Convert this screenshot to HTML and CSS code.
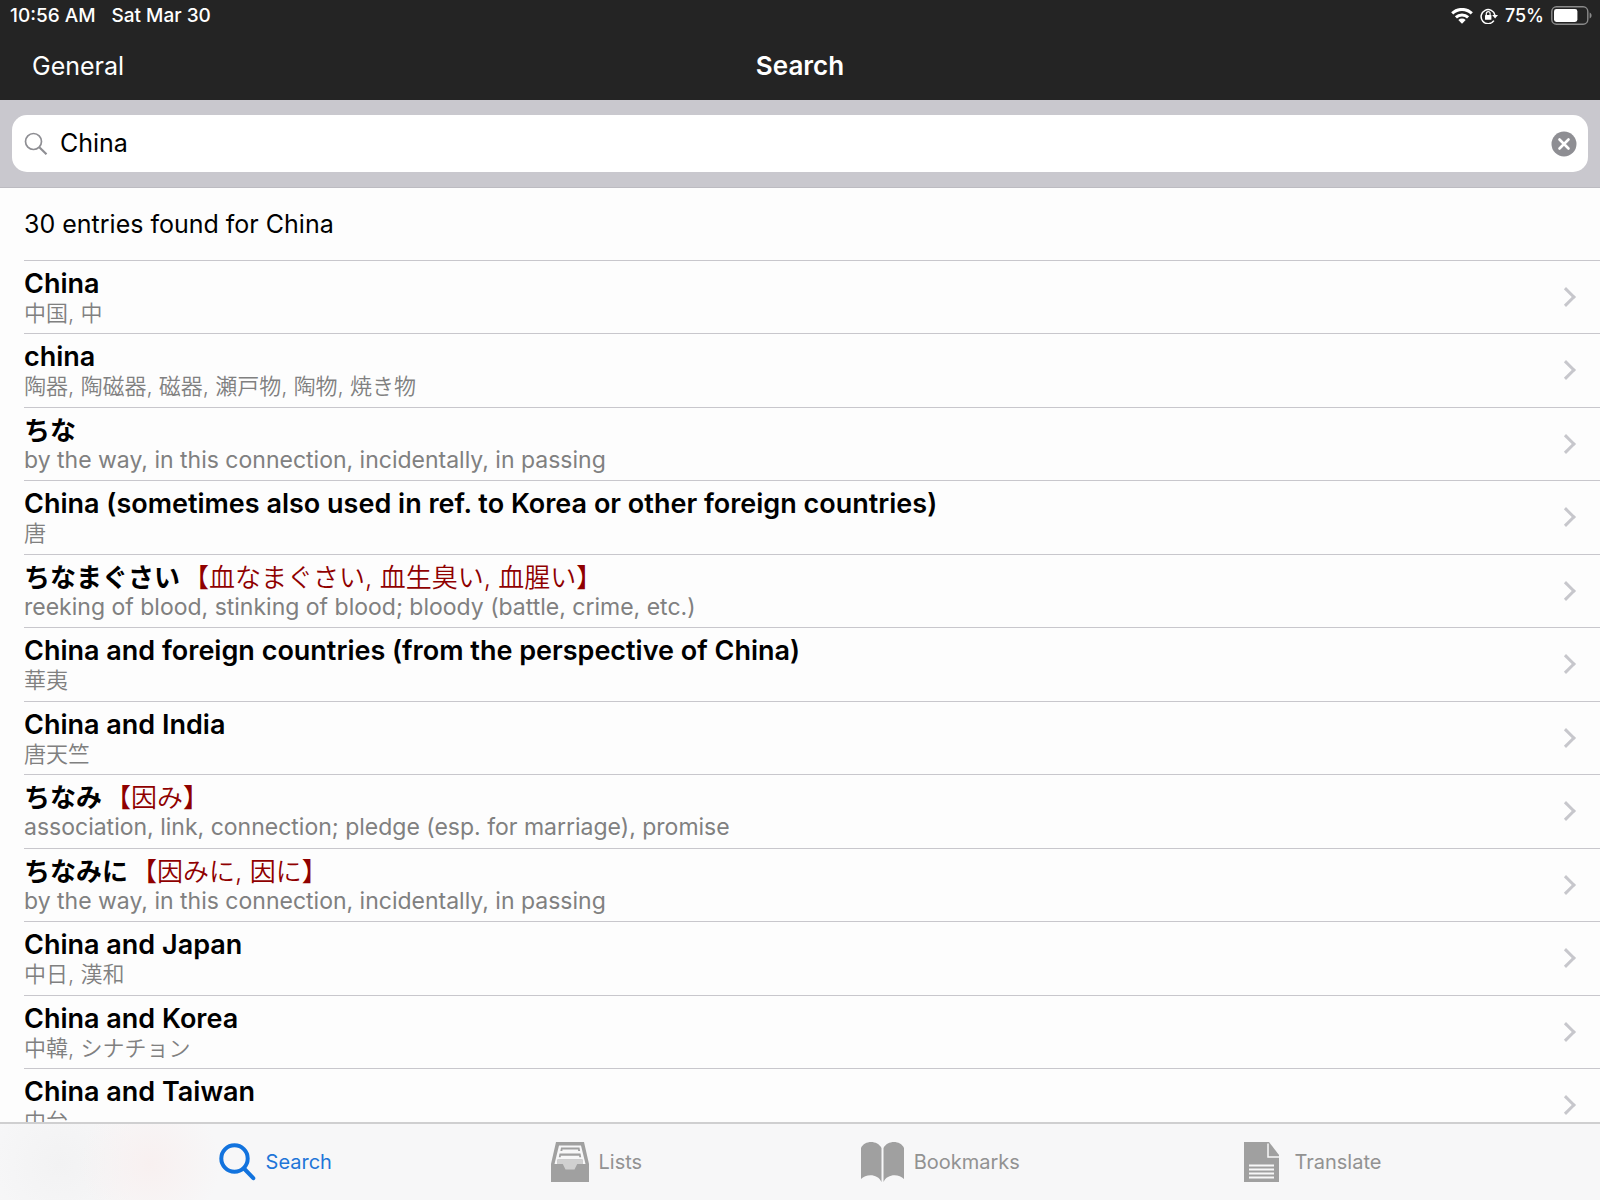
FILE: index.html
```html
<!DOCTYPE html>
<html lang="en">
<head>
<meta charset="utf-8">
<meta name="viewport" content="width=device-width, initial-scale=1">
<title>Search</title>
<link rel="stylesheet" href="styles.css">
</head>
<body>
<header class="top">
  <div class="status">
    <span>10:56 AM</span>
    <span>Sat Mar 30</span>
    <span class="status-right">
      <svg width="22" height="16" viewBox="0 0 22 16" aria-hidden="true"><g fill="none" stroke="#fff" stroke-width="3"><path d="M1.2 5.4a14 14 0 0 1 19.6 0"/><path d="M4.9 9.4a8.7 8.7 0 0 1 12.2 0"/></g><path d="M11 15.8 7.3 12a5.4 5.4 0 0 1 7.4 0z" fill="#fff"/></svg>
      <svg width="18" height="16" viewBox="0 0 18 16" aria-hidden="true"><path d="M13.9 12.6A7 7 0 1 1 15 7.4" fill="none" stroke="#fff" stroke-width="1.5"/><path d="M12.2 6.9h5.8l-2.9 3.6z" fill="#fff"/><rect x="5" y="7" width="6.4" height="4.8" rx=".6" fill="#fff"/><path d="M6.3 7.3V5.6a1.9 1.9 0 0 1 3.8 0v1.7" fill="none" stroke="#fff" stroke-width="1.2"/></svg>
      <span>75%</span>
      <svg width="41" height="19" viewBox="0 0 41 19" aria-hidden="true"><rect x=".8" y=".8" width="36" height="17.4" rx="4.6" fill="none" stroke="#8a8a8a" stroke-width="1.4"/><rect x="3" y="3" width="23.4" height="13" rx="2.4" fill="#fff"/><path d="M38.6 6.6c2.6 1 2.6 4.800 0 5.800z" fill="#8a8a8a"/></svg>
    </span>
  </div>
  <div class="bar">
    <button class="back" type="button">General</button>
    <h1 class="heading">Search</h1>
  </div>
</header>
<form class="search" role="search">
  <label class="field">
    <svg width="24" height="24" viewBox="0 0 24 24" fill="none" stroke="#8e8e93" aria-hidden="true"><circle cx="9.500" cy="9.500" r="8" stroke-width="1.700"/><path d="m15.300 15.300 7.200 7" stroke-width="2.200"/></svg>
    <input class="query" type="text" value="China" aria-label="Search">
    <button class="clear" type="reset" aria-label="Clear"><svg width="26" height="26" viewBox="0 0 26 26"><circle cx="13" cy="13" r="12.500" fill="#8e8e93"/><path d="m8.500 8.500 9 9m0-9-9 9" stroke="#fff" stroke-width="2.600" stroke-linecap="round"/></svg></button>
  </label>
</form>
<main class="results">
  <p class="summary">30 entries found for China</p>
  <ul class="list">
    <li class="row"><a class="entry" href="#"><span class="word">China</span><span class="gloss ja" lang="ja">中国, 中</span></a></li>
    <li class="row"><a class="entry" href="#"><span class="word">china</span><span class="gloss ja" lang="ja">陶器, 陶磁器, 磁器, 瀬戸物, 陶物, 焼き物</span></a></li>
    <li class="row"><a class="entry" href="#"><span class="word kana" lang="ja">ちな</span><span class="gloss">by the way, in this connection, incidentally, in passing</span></a></li>
    <li class="row"><a class="entry" href="#"><span class="word">China (sometimes also used in ref. to Korea or other foreign countries)</span><span class="gloss ja" lang="ja">唐</span></a></li>
    <li class="row"><a class="entry" href="#"><span class="word kana" lang="ja">ちなまぐさい<span class="kanji">【血なまぐさい, 血生臭い, 血腥い】</span></span><span class="gloss">reeking of blood, stinking of blood; bloody (battle, crime, etc.)</span></a></li>
    <li class="row"><a class="entry" href="#"><span class="word">China and foreign countries (from the perspective of China)</span><span class="gloss ja" lang="ja">華夷</span></a></li>
    <li class="row"><a class="entry" href="#"><span class="word">China and India</span><span class="gloss ja" lang="ja">唐天竺</span></a></li>
    <li class="row"><a class="entry" href="#"><span class="word kana" lang="ja">ちなみ<span class="kanji">【因み】</span></span><span class="gloss">association, link, connection; pledge (esp. for marriage), promise</span></a></li>
    <li class="row"><a class="entry" href="#"><span class="word kana" lang="ja">ちなみに<span class="kanji">【因みに, 因に】</span></span><span class="gloss">by the way, in this connection, incidentally, in passing</span></a></li>
    <li class="row"><a class="entry" href="#"><span class="word">China and Japan</span><span class="gloss ja" lang="ja">中日, 漢和</span></a></li>
    <li class="row"><a class="entry" href="#"><span class="word">China and Korea</span><span class="gloss ja" lang="ja">中韓, シナチョン</span></a></li>
    <li class="row"><a class="entry" href="#"><span class="word">China and Taiwan</span><span class="gloss ja" lang="ja">中台</span></a></li>
  </ul>
</main>
<nav class="tabs">
  <a class="tab active" href="#"><svg width="37" height="38" viewBox="0 0 37 38" fill="none" stroke="#1273de" stroke-width="4" aria-hidden="true"><circle cx="15.500" cy="15.500" r="13.200"/><path d="m25 25.500 9.300 9.700" stroke-linecap="round"/></svg>Search</a>
  <a class="tab" href="#"><svg width="38" height="40" viewBox="0 0 38 40" aria-hidden="true"><path fill="#a0a0a0" fill-rule="evenodd" d="M5 0h28l5 22v18H0V22zM8 3.500 3.500 22H6.500v-4.500h25V22h3L30 3.500z"/><path fill="#a0a0a0" d="M10 5.500h18.500l.6 3.500h-2V7.500H11.400V9H9.400zM8.500 11.500h21l.7 3.800h-2v-1.600H9.800v1.600h-2z"/><path fill="#d0d0d0" d="M6.500 17.500h25V22h-5.300l-2.700 5.500h-9L11.800 22H6.500z"/></svg>Lists</a>
  <a class="tab" href="#"><svg width="43" height="40" viewBox="0 0 43 40" fill="#a0a0a0" aria-hidden="true"><path d="M0 6C3.500-2 16.500-2 20.500 6v34C17 31.500 5 31.500 0 37z"/><path d="M43 6C39.500-2 26.500-2 22.500 6v34C26 31.500 38 31.500 43 37z"/></svg>Bookmarks</a>
  <a class="tab" href="#"><svg width="46" height="40" viewBox="-2 0 46 40" aria-hidden="true"><path fill="#a0a0a0" d="M4 0h25l10 13v27H4z"/><path d="M28 1.500v13.500h11" fill="none" stroke="#f7f7f8" stroke-width="1.500"/><path d="M9 23.500h25M9 27.500h25M9 31.500h25M9 35.500h25" stroke="#f7f7f8" stroke-width="1.800"/></svg>Translate</a>
</nav>
</body>
</html>
```
FILE: styles.css
```css
*,
*::after {
  box-sizing: border-box;
}

body {
  margin: 0;
  height: 100vh;
  display: flex;
  flex-direction: column;
  background: #fdfdfd;
  color: #000;
  font-family: Inter, "Noto Sans CJK JP", sans-serif;
  font-size: 25px;
}

a {
  color: inherit;
  text-decoration: none;
}

button,
input {
  padding: 0;
  border: 0;
  background: none;
  color: inherit;
  font: inherit;
}

.top {
  flex: none;
  background: #242424;
  color: #fff;
}

.status {
  display: flex;
  align-items: center;
  gap: 16px;
  height: 31px;
  padding: 0 8px 0 10px;
  font-size: 19px;
  font-weight: 500;
}

.status-right {
  display: flex;
  align-items: center;
  gap: 7px;
  margin-left: auto;
  font-size: 18px;
}

.bar {
  display: grid;
  grid-template-columns: 1fr auto 1fr;
  align-items: center;
  height: 69px;
  padding: 0 32px;
}

.back {
  justify-self: start;
}

.heading {
  margin: 0;
  font-size: 26px;
  font-weight: 600;
}

.search {
  flex: none;
  padding: 15px 12px;
  border-bottom: 1px solid #bcbbc1;
  background: #c9c8ce;
}

.field {
  display: flex;
  align-items: center;
  gap: 12px;
  height: 57px;
  padding: 0 11px 0 12px;
  border-radius: 15px;
  background: #fff;
}

.query {
  flex: 1;
  min-width: 0;
  padding-bottom: 2px;
  outline: 0;
}

.clear {
  display: flex;
}

.results {
  flex: 1;
  min-height: 0;
  overflow: hidden;
}

.summary {
  margin: 0;
  padding: 0 24px;
  line-height: 72px;
}

.list {
  margin: 0;
  padding: 0 0 0 24px;
  list-style: none;
}

.row {
  height: 73px;
  border-top: 1px solid #c8c7cc;
}

.row:nth-child(even) {
  height: 74px;
}

.entry {
  display: flex;
  flex-direction: column;
  position: relative;
  height: 100%;
  padding-top: 7px;
}

.entry::after {
  content: "";
  position: absolute;
  top: 29px;
  right: 27px;
  width: 14px;
  height: 14px;
  border: solid #c7c7cc;
  border-width: 3px 3px 0 0;
  transform: rotate(45deg);
}

.word {
  font-size: 27px;
  font-weight: 600;
  line-height: 32px;
}

.kana {
  font-size: 26px;
  font-weight: 700;
}

.kanji {
  margin-left: 3px;
  color: #8f0000;
  font-weight: 350;
}

.gloss {
  color: #808080;
  font-size: 23px;
  line-height: 27px;
}

.ja {
  font-size: 22px;
  font-weight: 350;
}

.tabs {
  flex: none;
  display: flex;
  align-items: center;
  justify-content: space-evenly;
  height: 78px;
  border-top: 2px solid #cfcfd0;
  background:
    radial-gradient(circle at 150px 40px, #f8f0f0, transparent 70px),
    radial-gradient(circle at 60px 40px, #f2f2f3, transparent 80px),
    #f7f7f8;
  color: #929292;
  font-size: 20px;
}

.tab {
  display: flex;
  align-items: center;
  gap: 10px;
}

.active {
  color: #1f76d8;
}
```
